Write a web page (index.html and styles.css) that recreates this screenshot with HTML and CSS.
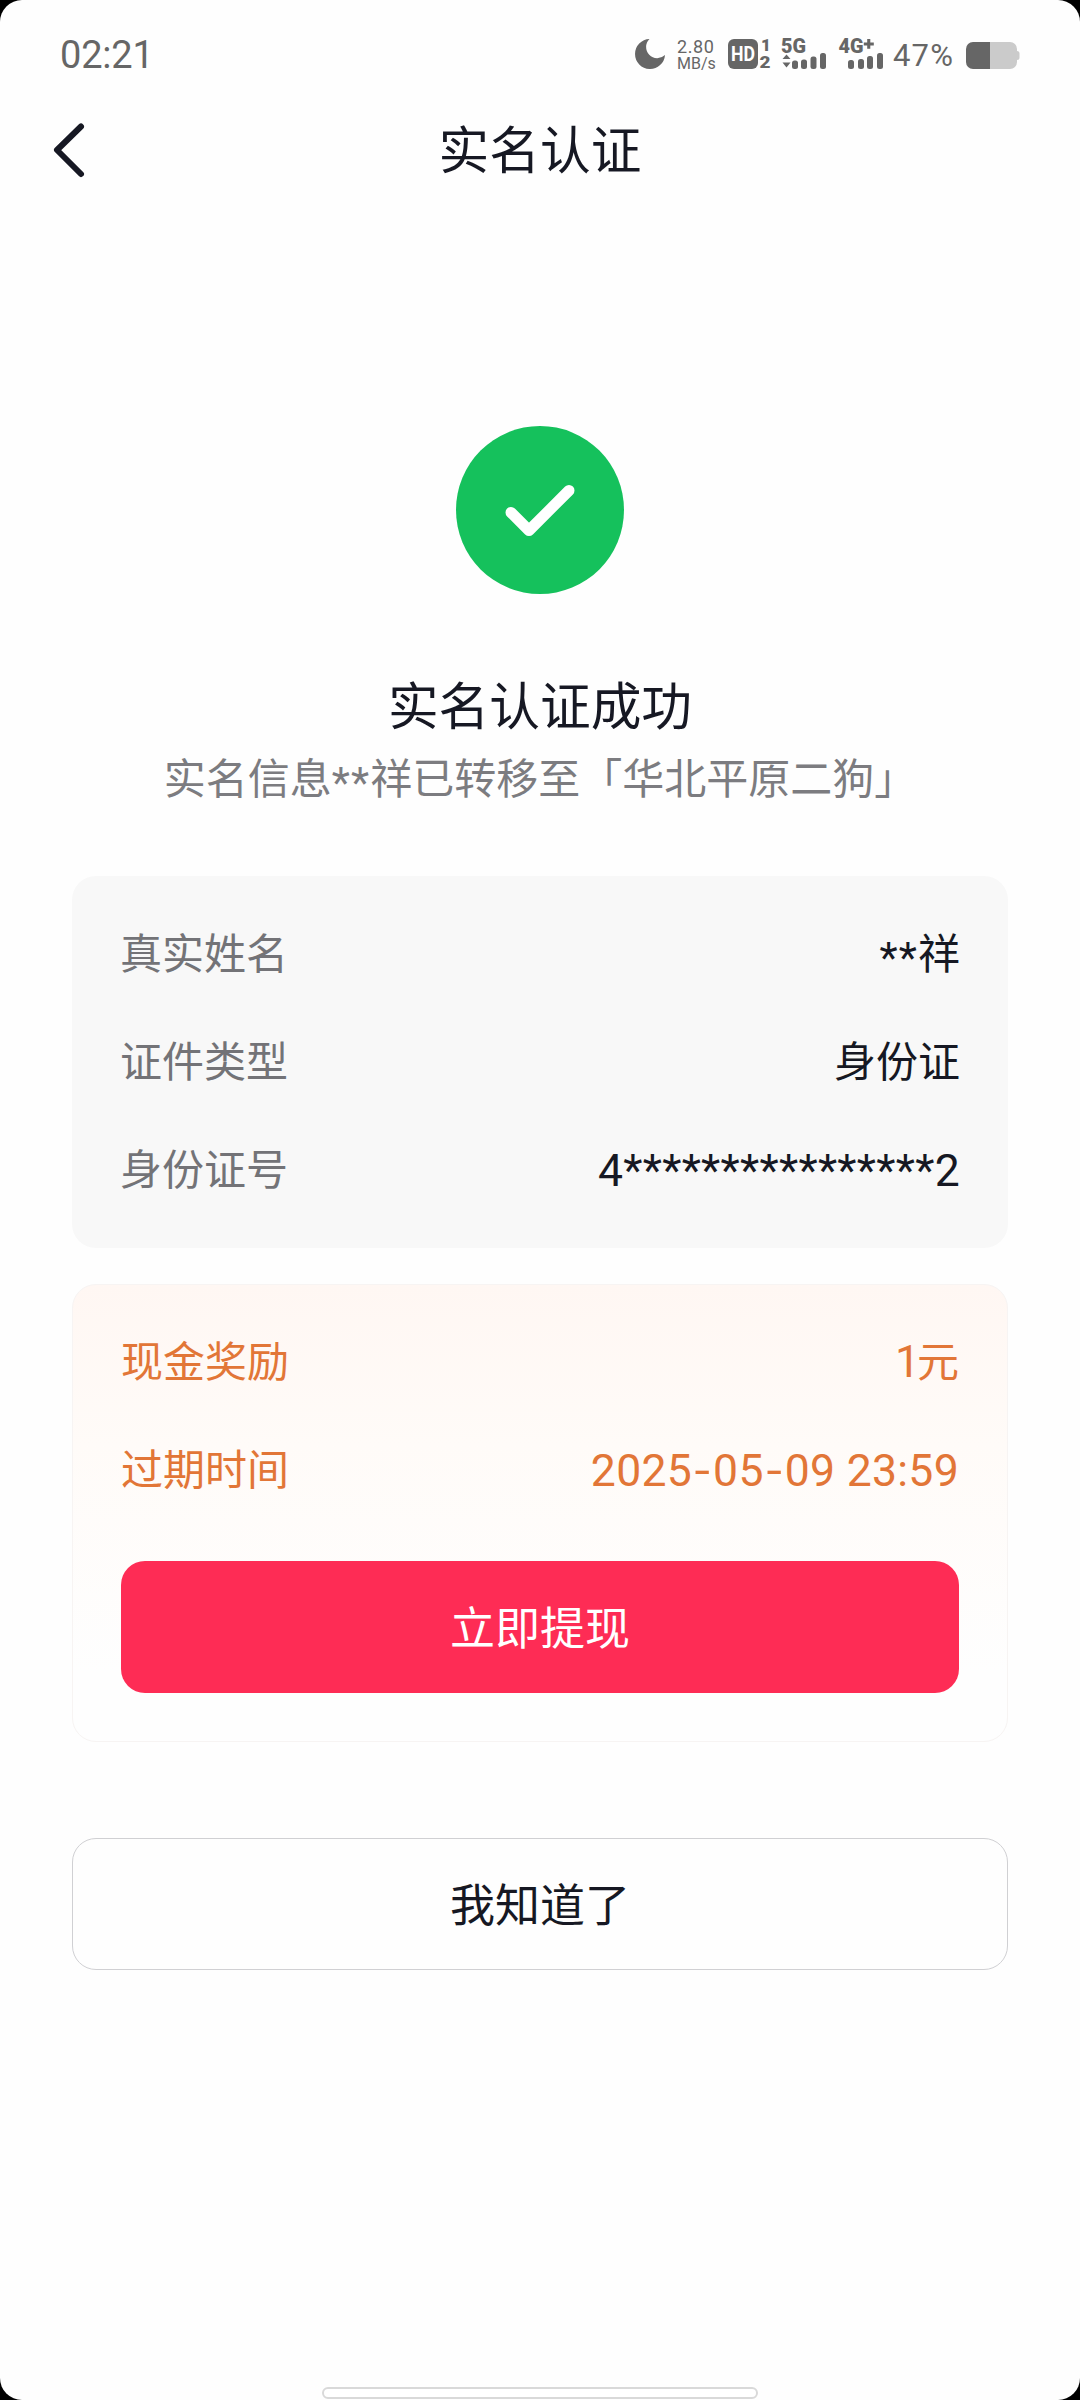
FILE: index.html
```html
<!DOCTYPE html>
<html lang="zh-CN">
<head>
<meta charset="utf-8">
<title>实名认证</title>
<link rel="stylesheet" href="styles.css">
</head>
<body>
<div class="screen">
  <div class="status-bar">
    <span class="clock">02:21</span>
    <div class="indicators">
      <svg class="moon" width="30" height="30" viewBox="0 0 30 30"><path d="M14.5 0A15 15 0 1 0 30 16A11 11 0 0 1 14.5 0Z"/></svg>
      <div class="speed"><span class="rate">2.80</span><span class="unit">MB/s</span></div>
      <svg class="hd" width="43" height="30" viewBox="0 0 43 30">
        <rect width="30" height="30" rx="6"/>
        <text class="hd-text" x="3" y="22" textLength="24" lengthAdjust="spacingAndGlyphs">HD</text>
        <text class="sim" x="33" y="12">1</text>
        <text class="sim" x="31.5" y="29" textLength="11" lengthAdjust="spacingAndGlyphs">2</text>
      </svg>
      <svg class="signal-5g" width="45" height="30" viewBox="0 0 45 30">
        <text class="net" x="-1" y="14" textLength="25" lengthAdjust="spacingAndGlyphs">5G</text>
        <path d="M0.5 20L4.5 15.5L8.5 20ZM0.5 23.5L4.5 28.5L8.5 23.5Z"/>
        <rect x="10" y="21.5" width="6" height="8.5" rx="2.5"/>
        <rect x="19" y="20.5" width="6" height="9.5" rx="2.5"/>
        <rect x="28.5" y="17.5" width="6" height="12.5" rx="2.5"/>
        <rect x="38" y="14" width="6" height="16" rx="2.5"/>
      </svg>
      <svg class="signal-4g" width="44" height="30" viewBox="0 0 44 30">
        <text class="net" x="-0.5" y="14" textLength="25" lengthAdjust="spacingAndGlyphs">4G</text>
        <path d="M28.2 0H31.3V3.4H34.8V6.4H31.3V9.8H28.2V6.4H24.8V3.4H28.2Z"/>
        <rect x="9" y="21" width="6" height="9" rx="2.5"/>
        <rect x="19" y="20" width="6" height="10" rx="2.5"/>
        <rect x="28" y="17" width="6" height="13" rx="2.5"/>
        <rect x="38" y="14" width="6" height="16" rx="2.5"/>
      </svg>
      <span class="percent">47%</span>
      <svg class="battery" width="54" height="27" viewBox="0 0 54 27">
        <path class="battery-rest" d="M24 0H44A7 7 0 0 1 51 7V9Q53.5 9 53.5 11.5V15.5Q53.5 18 51 18V20A7 7 0 0 1 44 27H24Z"/>
        <path d="M24 0H7A7 7 0 0 0 0 7V20A7 7 0 0 0 7 27H24Z"/>
      </svg>
    </div>
  </div>

  <header class="nav">
    <svg class="back" width="36" height="60" viewBox="0 0 36 60"><path d="M29 6.5L5 30L29 54"/></svg>
    <h1 class="nav-title">实名认证</h1>
  </header>

  <main class="content">
    <svg class="success" width="168" height="168" viewBox="0 0 168 168">
      <circle cx="84" cy="84" r="84"/>
      <path d="M55 86.5L73 104.5L113 64.5"/>
    </svg>
    <h2 class="headline">实名认证成功</h2>
    <p class="subtitle">实名信息<span class="stars">**</span>祥已转移至「华北平原二狗」</p>

    <section class="card identity">
      <div class="row"><span class="label">真实姓名</span><span class="value"><span class="stars">**</span>祥</span></div>
      <div class="row"><span class="label">证件类型</span><span class="value">身份证</span></div>
      <div class="row"><span class="label">身份证号</span><span class="value digits">4****************2</span></div>
    </section>

    <section class="card reward">
      <div class="row"><span>现金奖励</span><span><span class="amount">1</span>元</span></div>
      <div class="row"><span>过期时间</span><span class="digits">2025<span class="dash">-</span>05<span class="dash">-</span>09 23:59</span></div>
      <button class="button primary">立即提现</button>
    </section>

    <button class="button secondary">我知道了</button>
  </main>

  <div class="home-indicator"></div>
</div>
</body>
</html>
```
FILE: styles.css
```css
* { box-sizing: border-box; }
html { background: #000; }
body { margin: 0; background: #000; font-family: "Noto Sans CJK SC", sans-serif; color: #161823; }
h1, h2, p { margin: 0; font-weight: 400; }

.screen {
  width: 1080px;
  height: 2400px;
  background: #fefefe;
  border-radius: 22px;
  display: flex;
  flex-direction: column;
  overflow: hidden;
}

.status-bar {
  height: 108px;
  padding: 0 60px;
  display: flex;
  justify-content: space-between;
  align-items: center;
  color: #666;
  fill: #666;
  font-family: Roboto, sans-serif;
}
.clock { font-size: 38px; letter-spacing: -0.2px; line-height: 44px; margin-top: 2px; }
.indicators { display: flex; align-items: center; height: 30px; }
.indicators svg { flex: none; overflow: visible; }
.speed { display: flex; flex-direction: column; width: 39px; margin: 1px 12px 0 12px; }
.speed span { line-height: 17px; white-space: nowrap; }
.rate { font-size: 18px; letter-spacing: 0.6px; }
.unit { font-size: 16px; }
.hd { margin-right: 11px; }
.hd-text { font-size: 20px; font-weight: 700; fill: #fff; }
.sim { font-size: 17px; font-weight: 900; }
.net { font-size: 19.5px; font-weight: 900; }
.signal-5g { margin-right: 12px; }
.percent { font-size: 31px; letter-spacing: 1.2px; width: 62px; margin: 3px 11px 0 10px; line-height: 36px; white-space: nowrap; }
.battery { margin-top: 3px; }
.battery-rest { fill: #cbcbcb; }

.nav {
  height: 84px;
  padding: 0 52px;
  display: grid;
  grid-template-columns: 36px 1fr 36px;
  align-items: center;
}
.back { fill: none; stroke: #161823; stroke-width: 6; stroke-linecap: round; stroke-linejoin: round; }
.nav-title { margin-bottom: 6px; font-size: 50.7px; line-height: 74px; text-align: center; }

.content { padding: 234px 72px 0; display: flex; flex-direction: column; }
.success { align-self: center; fill: #15c15c; }
.success path { fill: none; stroke: #fff; stroke-width: 11; stroke-linecap: round; stroke-linejoin: round; }
.headline { margin-top: 73px; font-size: 50.7px; line-height: 72px; text-align: center; }
.subtitle { margin-top: 7px; font-size: 42px; line-height: 60px; height: 60px; text-align: center; color: #7c7c80; white-space: nowrap; }
.stars { font-family: Roboto, sans-serif; font-size: 42px; letter-spacing: 1.2px; line-height: 1; vertical-align: -3px; }

.card { border-radius: 24px; padding: 0 48px; }
.row { height: 60px; display: flex; justify-content: space-between; align-items: center; font-size: 42px; line-height: 60px; }
.row + .row { margin-top: 48px; }
.digits { font-family: Roboto, sans-serif; font-size: 44.5px; letter-spacing: 0.3px; margin-top: 7px; }
.dash { display: inline-block; width: 21px; text-align: center; transform: scaleX(1.25); }
.amount { font-family: Roboto, sans-serif; font-size: 44.5px; letter-spacing: -3px; line-height: 1; }
.label { color: #737377; }
.identity { margin-top: 70px; height: 372px; padding-top: 45px; background: #f8f8f8; }
.reward {
  margin-top: 36px;
  height: 458px;
  padding: 44px 48px 0;
  border: 1px solid #f7f4f3;
  background: linear-gradient(#fff7f3, #fffbf8 35%, #fefefe 85%);
  color: #e27637;
}

.button {
  width: 100%;
  height: 132px;
  padding: 0 0 3px;
  border: 0;
  border-radius: 24px;
  font-family: inherit;
  font-size: 45px;
  line-height: 66px;
}
.primary { margin-top: 64px; background: #fe2c55; color: #fff; }
.secondary { margin-top: 96px; background: #fefefe; border: 1px solid #d0d0d3; color: #161823; }

.home-indicator {
  width: 436px;
  height: 12px;
  margin: auto auto 1px;
  border: 2px solid #d9d9d9;
  border-radius: 6px;
  background: #fff;
}
```
